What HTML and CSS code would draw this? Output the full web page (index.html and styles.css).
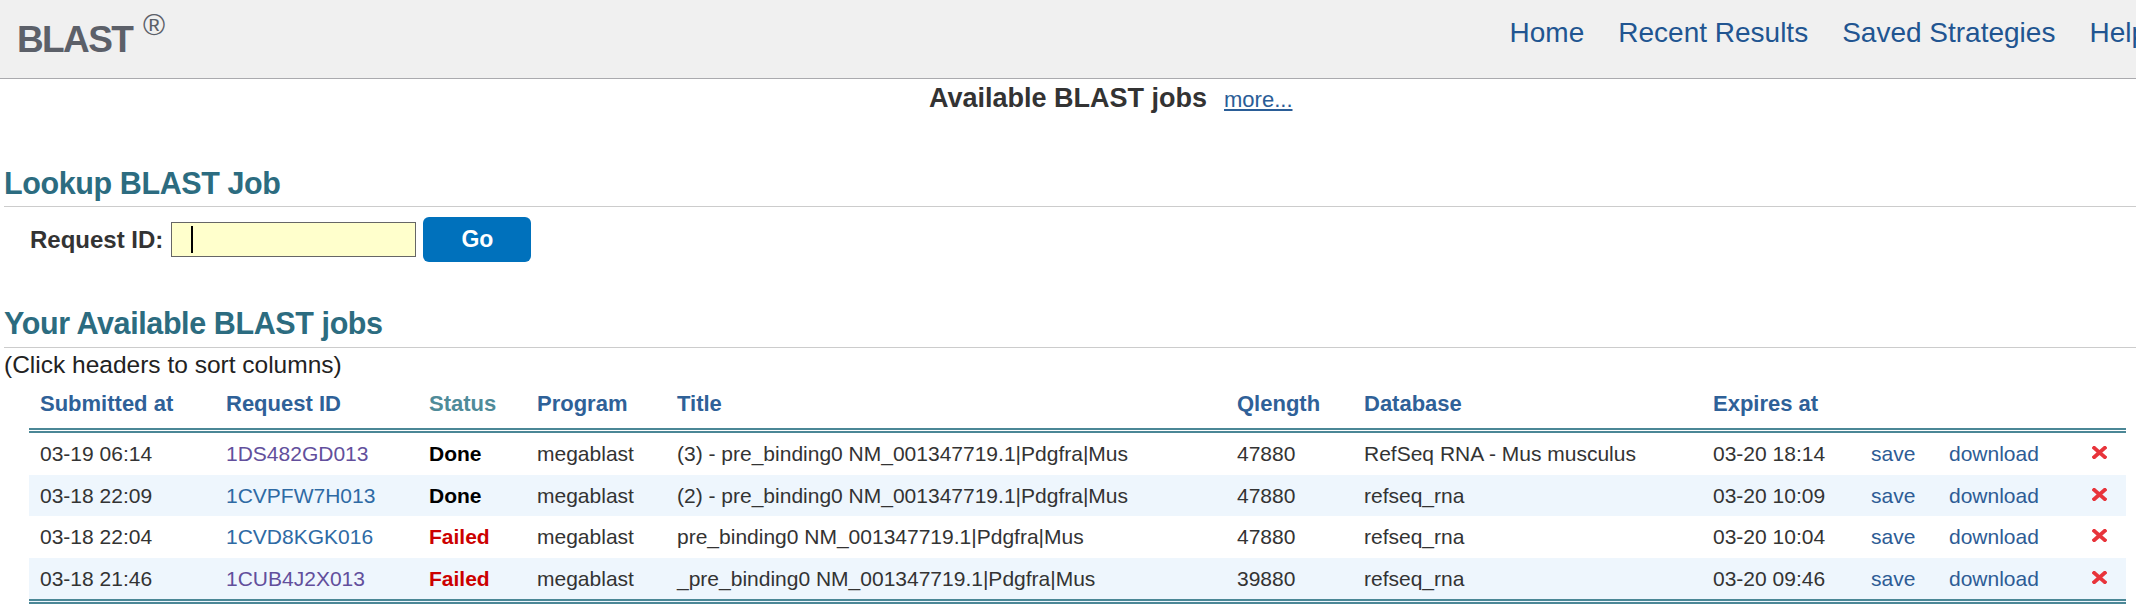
FILE: index.html
```html
<!DOCTYPE html>
<html lang="en">
<head>
<meta charset="utf-8">
<title>BLAST - Recent Results</title>
<link rel="stylesheet" href="styles.css">
</head>
<body>
<header class="topbar">
  <div class="brand">BLAST <span class="reg">®</span></div>
  <nav class="topnav">
    <a href="#">Home</a>
    <a href="#">Recent Results</a>
    <a href="#">Saved Strategies</a>
    <a href="#">Help</a>
  </nav>
</header>
<main class="content">
  <div class="jobsbar">
    <span class="jobsbar-side"></span>
    <h1 class="jobsbar-title">Available BLAST jobs</h1>
    <a class="jobsbar-more" href="#">more...</a>
  </div>

  <section class="lookup">
    <h2 class="section-title">Lookup BLAST Job</h2>
    <form class="lookup-form">
      <label class="lookup-label" for="rid">Request ID:</label>
      <span class="field"><input id="rid" class="lookup-input" type="text"><span class="caret"></span></span>
      <button class="go-btn" type="button">Go</button>
    </form>
  </section>

  <section class="jobs">
    <h2 class="section-title section-title--jobs">Your Available BLAST jobs</h2>
    <p class="sort-hint">(Click headers to sort columns)</p>
    <table class="jobs-table">
      <colgroup>
        <col class="c-sub"><col class="c-rid"><col class="c-status"><col class="c-prog"><col class="c-title"><col class="c-qlen"><col class="c-db"><col class="c-exp"><col class="c-save"><col class="c-dl"><col class="c-del">
      </colgroup>
      <thead>
        <tr>
          <th>Submitted at</th>
          <th>Request ID</th>
          <th class="th-sorted">Status</th>
          <th>Program</th>
          <th>Title</th>
          <th>Qlength</th>
          <th>Database</th>
          <th>Expires at</th>
          <th></th>
          <th></th>
          <th></th>
        </tr>
      </thead>
      <tbody>
        <tr>
          <td>03-19 06:14</td>
          <td><a class="rid rid--visited" href="#">1DS482GD013</a></td>
          <td class="st-done">Done</td>
          <td>megablast</td>
          <td>(3) - pre_binding0 NM_001347719.1|Pdgfra|Mus</td>
          <td>47880</td>
          <td>RefSeq RNA - Mus musculus</td>
          <td>03-20 18:14</td>
          <td><a class="act" href="#">save</a></td>
          <td><a class="act" href="#">download</a></td>
          <td><a class="del" href="#" title="Remove"><svg width="15" height="13" viewBox="0 0 15 13"><path d="M2.2 1.8L12.8 11.2M12.8 1.8L2.2 11.2" stroke="#e8343b" stroke-width="3.8" stroke-linecap="square"/></svg></a></td>
        </tr>
        <tr>
          <td>03-18 22:09</td>
          <td><a class="rid" href="#">1CVPFW7H013</a></td>
          <td class="st-done">Done</td>
          <td>megablast</td>
          <td>(2) - pre_binding0 NM_001347719.1|Pdgfra|Mus</td>
          <td>47880</td>
          <td>refseq_rna</td>
          <td>03-20 10:09</td>
          <td><a class="act" href="#">save</a></td>
          <td><a class="act" href="#">download</a></td>
          <td><a class="del" href="#" title="Remove"><svg width="15" height="13" viewBox="0 0 15 13"><path d="M2.2 1.8L12.8 11.2M12.8 1.8L2.2 11.2" stroke="#e8343b" stroke-width="3.8" stroke-linecap="square"/></svg></a></td>
        </tr>
        <tr>
          <td>03-18 22:04</td>
          <td><a class="rid" href="#">1CVD8KGK016</a></td>
          <td class="st-failed">Failed</td>
          <td>megablast</td>
          <td>pre_binding0 NM_001347719.1|Pdgfra|Mus</td>
          <td>47880</td>
          <td>refseq_rna</td>
          <td>03-20 10:04</td>
          <td><a class="act" href="#">save</a></td>
          <td><a class="act" href="#">download</a></td>
          <td><a class="del" href="#" title="Remove"><svg width="15" height="13" viewBox="0 0 15 13"><path d="M2.2 1.8L12.8 11.2M12.8 1.8L2.2 11.2" stroke="#e8343b" stroke-width="3.8" stroke-linecap="square"/></svg></a></td>
        </tr>
        <tr>
          <td>03-18 21:46</td>
          <td><a class="rid rid--visited" href="#">1CUB4J2X013</a></td>
          <td class="st-failed">Failed</td>
          <td>megablast</td>
          <td>_pre_binding0 NM_001347719.1|Pdgfra|Mus</td>
          <td>39880</td>
          <td>refseq_rna</td>
          <td>03-20 09:46</td>
          <td><a class="act" href="#">save</a></td>
          <td><a class="act" href="#">download</a></td>
          <td><a class="del" href="#" title="Remove"><svg width="15" height="13" viewBox="0 0 15 13"><path d="M2.2 1.8L12.8 11.2M12.8 1.8L2.2 11.2" stroke="#e8343b" stroke-width="3.8" stroke-linecap="square"/></svg></a></td>
        </tr>
      </tbody>
    </table>
  </section>
</main>
</body>
</html>
```

FILE: styles.css
```css
html, body {
  margin: 0;
  padding: 0;
  overflow-x: hidden;
  background: #fff;
}

body {
  font-family: "Liberation Sans", Arial, Helvetica, sans-serif;
  color: #333;
}

a {
  text-decoration: none;
}

/* ---------- top bar ---------- */
.topbar {
  display: flex;
  align-items: flex-start;
  height: 78px;
  background: #f0f0f0;
  border-bottom: 1px solid #aaaaae;
  overflow: hidden;
}

.brand {
  padding: 21px 0 0 17px;
  font-size: 37px;
  line-height: 37px;
  font-weight: bold;
  letter-spacing: -1.6px;
  color: #5c6069;
  white-space: nowrap;
}

.reg {
  margin-left: 2px;
  font-size: 30px;
  line-height: 0;
  font-weight: normal;
  letter-spacing: 0;
  vertical-align: 17px;
}

.topnav {
  display: flex;
  gap: 34px;
  margin-left: auto;
  margin-right: -11px;
  padding-top: 19px;
}

.topnav a {
  font-size: 28px;
  line-height: 28px;
  color: #215591;
  white-space: nowrap;
}

/* ---------- available jobs bar ---------- */
.jobsbar {
  display: grid;
  grid-template-columns: 1fr auto 1fr;
  align-items: baseline;
  padding-top: 6px;
}

.jobsbar-title {
  margin: 0;
  font-size: 27px;
  line-height: 27px;
  font-weight: bold;
  color: #333;
}

.jobsbar-more {
  justify-self: start;
  margin-left: 17px;
  font-size: 22px;
  line-height: 27px;
  color: #2a5d97;
  text-decoration: underline;
}

/* ---------- section headings ---------- */
.section-title {
  margin: 55px 0 0 4px;
  padding-bottom: 8px;
  font-size: 30.5px;
  line-height: 30px;
  font-weight: bold;
  letter-spacing: -0.4px;
  color: #2c6c80;
  border-bottom: 1px solid #cccccc;
}

.section-title--jobs {
  margin-top: 46px;
  padding-bottom: 9px;
}

/* ---------- lookup ---------- */
.lookup-form {
  display: flex;
  align-items: center;
  margin: 10px 0 0 3px;
}

.lookup-label {
  padding-left: 27px;
  font-size: 24px;
  line-height: 24px;
  font-weight: bold;
  color: #333;
}

.field {
  position: relative;
  display: block;
  margin-left: 8px;
}

.lookup-input {
  display: block;
  box-sizing: border-box;
  width: 245px;
  height: 35px;
  margin: 0;
  padding: 0 0 0 20px;
  border: 1px solid #666;
  border-radius: 0;
  background: #ffffcc;
  font: 20px "Liberation Sans", Arial, sans-serif;
  outline: none;
}

.caret {
  position: absolute;
  left: 20px;
  top: 4px;
  width: 2px;
  height: 27px;
  background: #000;
}

.go-btn {
  width: 108px;
  height: 45px;
  margin-left: 7px;
  padding: 0;
  border: none;
  border-radius: 6px;
  background: #0071bc;
  color: #fff;
  font: bold 23px "Liberation Sans", Arial, sans-serif;
  cursor: pointer;
}

/* ---------- jobs list ---------- */
.sort-hint {
  margin: 5px 0 0 4px;
  font-size: 24.5px;
  line-height: 24px;
  color: #222;
}

.jobs-table {
  table-layout: fixed;
  width: 2097px;
  margin: 6px 0 0 29px;
  border-collapse: separate;
  border-spacing: 0;
}

.c-sub { width: 186px; }
.c-rid { width: 203px; }
.c-status { width: 108px; }
.c-prog { width: 140px; }
.c-title { width: 560px; }
.c-qlen { width: 127px; }
.c-db { width: 349px; }
.c-exp { width: 158px; }
.c-save { width: 78px; }
.c-dl { width: 143px; }
.c-del { width: 45px; }

.jobs-table th {
  padding: 10px 11px 13px;
  text-align: left;
  font-size: 22px;
  line-height: 22px;
  font-weight: bold;
  color: #2f6198;
  white-space: nowrap;
  border-bottom: 5px double #4b8796;
}

.jobs-table th.th-sorted {
  color: #4f8b99;
}

.jobs-table td {
  padding: 10px 11px;
  font-size: 21px;
  line-height: 21.5px;
  color: #333;
  white-space: nowrap;
  overflow: hidden;
}

.jobs-table tbody tr:nth-child(even) td {
  background: #eef6fd;
}

.jobs-table tbody tr:last-child td {
  border-bottom: 5px double #4b8796;
}

.rid { color: #2e6aa4; }
.rid--visited { color: #624f9c; }

.st-done { font-weight: bold; color: #000 !important; }
.st-failed { font-weight: bold; color: #cc0000 !important; }

.act { color: #2d5c95; }

.del {
  display: inline-block;
  line-height: 0;
  vertical-align: 2px;
}
```
